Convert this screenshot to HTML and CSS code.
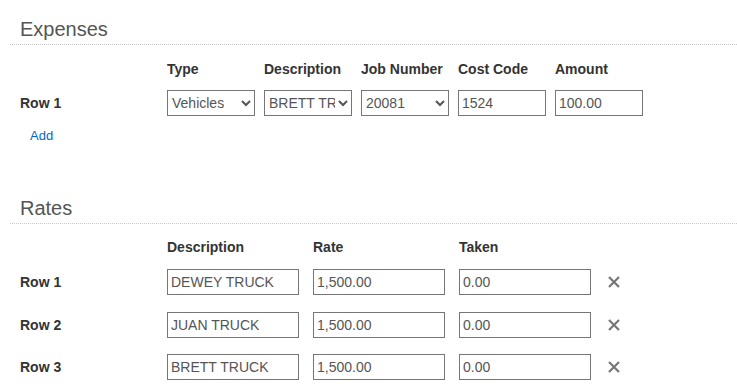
FILE: index.html
```html
<!DOCTYPE html>
<html lang="en">
<head>
    <meta charset="UTF-8">
    <meta name="viewport" content="width=device-width, initial-scale=1.0">
    <title>Expenses and Rates</title>
    <link rel="stylesheet" href="styles.css">
</head>
<body>
    <div class="page">
        <section class="section expenses">
            <h2 class="section-title">Expenses</h2>

            <div class="exp-row exp-head">
                <div></div>
                <div class="col-head">Type</div>
                <div class="col-head">Description</div>
                <div class="col-head">Job Number</div>
                <div class="col-head">Cost Code</div>
                <div class="col-head">Amount</div>
            </div>

            <div class="exp-row">
                <div class="row-label">Row 1</div>
                <select class="field">
                    <option>Vehicles</option>
                    <option>Fuel</option>
                    <option>Materials</option>
                </select>
                <select class="field">
                    <option>BRETT TRUCK</option>
                    <option>DEWEY TRUCK</option>
                    <option>JUAN TRUCK</option>
                </select>
                <select class="field">
                    <option>20081</option>
                    <option>20082</option>
                </select>
                <input class="field" type="text" value="1524">
                <input class="field" type="text" value="100.00">
            </div>

            <a class="add-link" href="#">Add</a>
        </section>

        <section class="section rates">
            <h2 class="section-title">Rates</h2>

            <div class="rate-row rate-head">
                <div></div>
                <div class="col-head">Description</div>
                <div class="col-head">Rate</div>
                <div class="col-head">Taken</div>
                <div></div>
            </div>

            <div class="rate-row">
                <div class="row-label">Row 1</div>
                <input class="field" type="text" value="DEWEY TRUCK">
                <input class="field" type="text" value="1,500.00">
                <input class="field" type="text" value="0.00">
                <button class="remove" type="button" title="Remove">
                    <svg width="12" height="12" viewBox="0 0 12 12"><path d="M1 1 L11 11 M11 1 L1 11"/></svg>
                </button>
            </div>
            <div class="rate-row">
                <div class="row-label">Row 2</div>
                <input class="field" type="text" value="JUAN TRUCK">
                <input class="field" type="text" value="1,500.00">
                <input class="field" type="text" value="0.00">
                <button class="remove" type="button" title="Remove">
                    <svg width="12" height="12" viewBox="0 0 12 12"><path d="M1 1 L11 11 M11 1 L1 11"/></svg>
                </button>
            </div>
            <div class="rate-row">
                <div class="row-label">Row 3</div>
                <input class="field" type="text" value="BRETT TRUCK">
                <input class="field" type="text" value="1,500.00">
                <input class="field" type="text" value="0.00">
                <button class="remove" type="button" title="Remove">
                    <svg width="12" height="12" viewBox="0 0 12 12"><path d="M1 1 L11 11 M11 1 L1 11"/></svg>
                </button>
            </div>
        </section>
    </div>
</body>
</html>
```

FILE: styles.css
```css
* {
    margin: 0;
    padding: 0;
    box-sizing: border-box;
}

body {
    font-family: 'Liberation Sans', Arial, sans-serif;
    font-size: 14px;
    color: #333;
    background: #fff;
}

.page {
    padding: 17px 0 0 10px;
}

.section-title {
    font-size: 20px;
    font-weight: normal;
    line-height: 24px;
    color: #555;
    padding: 0 0 3px 10px;
    border-bottom: 1px dotted #c8c8c8;
}

.col-head {
    font-weight: bold;
    line-height: 16px;
}

.row-label {
    font-weight: bold;
    line-height: 16px;
    align-self: center;
}

.field {
    font-family: 'Liberation Sans', Arial, sans-serif;
    font-size: 14px;
    color: #555;
    height: 26px;
    width: 100%;
    padding: 0 3px;
    border: 1px solid #767676;
    border-radius: 0;
    background: #fff;
}

select.field {
    padding: 0;
}

/* expenses */
.exp-row {
    display: grid;
    grid-template-columns: 138px repeat(5, 88px);
    column-gap: 9px;
    padding-left: 10px;
    align-items: center;
}

.exp-head {
    margin-top: 16px;
    margin-bottom: 13px;
}

.add-link {
    display: inline-block;
    margin: 12px 0 0 20px;
    font-size: 13px;
    line-height: 16px;
    color: #0066cc;
    text-decoration: none;
}

/* rates */
.rates {
    margin-top: 52px;
}

.rate-row {
    display: grid;
    grid-template-columns: 133px repeat(3, 132px) 18px;
    column-gap: 14px;
    padding-left: 10px;
    align-items: center;
    margin-bottom: 16.5px;
}

.rate-head {
    margin-top: 15px;
    margin-bottom: 14px;
}

.remove {
    border: none;
    background: none;
    width: 18px;
    height: 20px;
    display: flex;
    align-items: center;
    justify-content: center;
    cursor: pointer;
}

.remove svg path {
    stroke: #777;
    stroke-width: 2.2;
    fill: none;
}
```
